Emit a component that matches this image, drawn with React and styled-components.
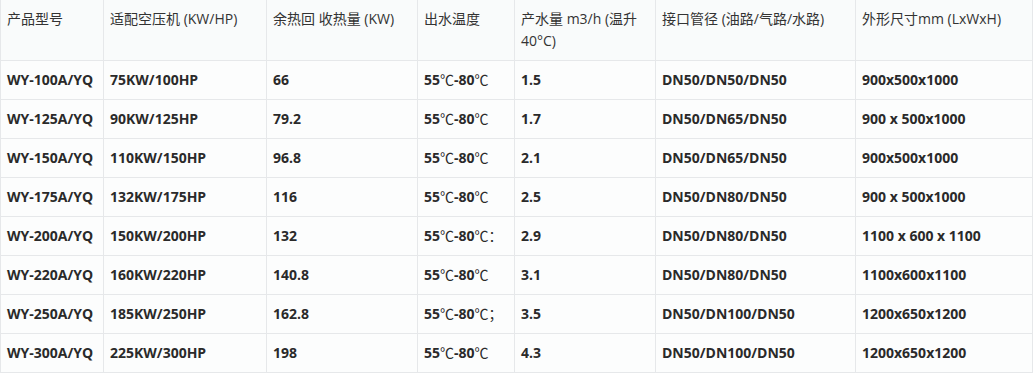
import React from "react";
import styled, { createGlobalStyle } from "styled-components";

const Global = createGlobalStyle`
    body {
        margin: 0;
        background: #fff;
    }
`;

const Table = styled.table`
    width: 1033px;
    border-collapse: collapse;
    table-layout: fixed;
    font-family: "Open Sans", "Noto Sans CJK SC", sans-serif;
    font-size: 14px;
    color: #333;
`;

const HeadCell = styled.th`
    height: 52px;
    padding: 8px 6px 0 6px;
    vertical-align: top;
    text-align: left;
    font-weight: normal;
    line-height: 22px;
    background: #f9fbfb;
    border: 1px solid #e6e8ea;
    border-top: none;
`;

const Cell = styled.td`
    height: 38px;
    padding: 0 6px;
    vertical-align: middle;
    font-weight: bold;
    line-height: 20px;
    color: #2a2a2a;
    background: #fcfdfd;
    border: 1px solid #e6e8ea;
    white-space: nowrap;
`;

const Deg = styled.span`
    font-weight: normal;
`;

const widths = [103, 163, 151, 97, 141, 200, 177];

const heads = [
    "产品型号",
    "适配空压机 (KW/HP)",
    "余热回 收热量 (KW)",
    "出水温度",
    "产水量 m3/h (温升 40°C)",
    "接口管径 (油路/气路/水路)",
    "外形尺寸mm (LxWxH)",
];

const rows = [
    ["WY-100A/YQ", "75KW/100HP", "66", "", "1.5", "DN50/DN50/DN50", "900x500x1000"],
    ["WY-125A/YQ", "90KW/125HP", "79.2", "", "1.7", "DN50/DN65/DN50", "900 x 500x1000"],
    ["WY-150A/YQ", "110KW/150HP", "96.8", "", "2.1", "DN50/DN65/DN50", "900x500x1000"],
    ["WY-175A/YQ", "132KW/175HP", "116", "", "2.5", "DN50/DN80/DN50", "900 x 500x1000"],
    ["WY-200A/YQ", "150KW/200HP", "132", "：", "2.9", "DN50/DN80/DN50", "1100 x 600 x 1100"],
    ["WY-220A/YQ", "160KW/220HP", "140.8", "", "3.1", "DN50/DN80/DN50", "1100x600x1100"],
    ["WY-250A/YQ", "185KW/250HP", "162.8", "；", "3.5", "DN50/DN100/DN50", "1200x650x1200"],
    ["WY-300A/YQ", "225KW/300HP", "198", "", "4.3", "DN50/DN100/DN50", "1200x650x1200"],
];

const Temp = ({ tail }) => (
    <>
        55<Deg>℃</Deg>-80<Deg>℃{tail}</Deg>
    </>
);

export default function App() {
    return (
        <>
            <Global />
            <Table>
                <colgroup>
                    {widths.map((w, i) => (
                        <col key={i} style={{ width: w }} />
                    ))}
                </colgroup>
                <thead>
                    <tr>
                        {heads.map((h) => (
                            <HeadCell key={h}>{h}</HeadCell>
                        ))}
                    </tr>
                </thead>
                <tbody>
                    {rows.map((r) => (
                        <tr key={r[0]}>
                            <Cell>{r[0]}</Cell>
                            <Cell>{r[1]}</Cell>
                            <Cell>{r[2]}</Cell>
                            <Cell>
                                <Temp tail={r[3]} />
                            </Cell>
                            <Cell>{r[4]}</Cell>
                            <Cell>{r[5]}</Cell>
                            <Cell>{r[6]}</Cell>
                        </tr>
                    ))}
                </tbody>
            </Table>
        </>
    );
}
